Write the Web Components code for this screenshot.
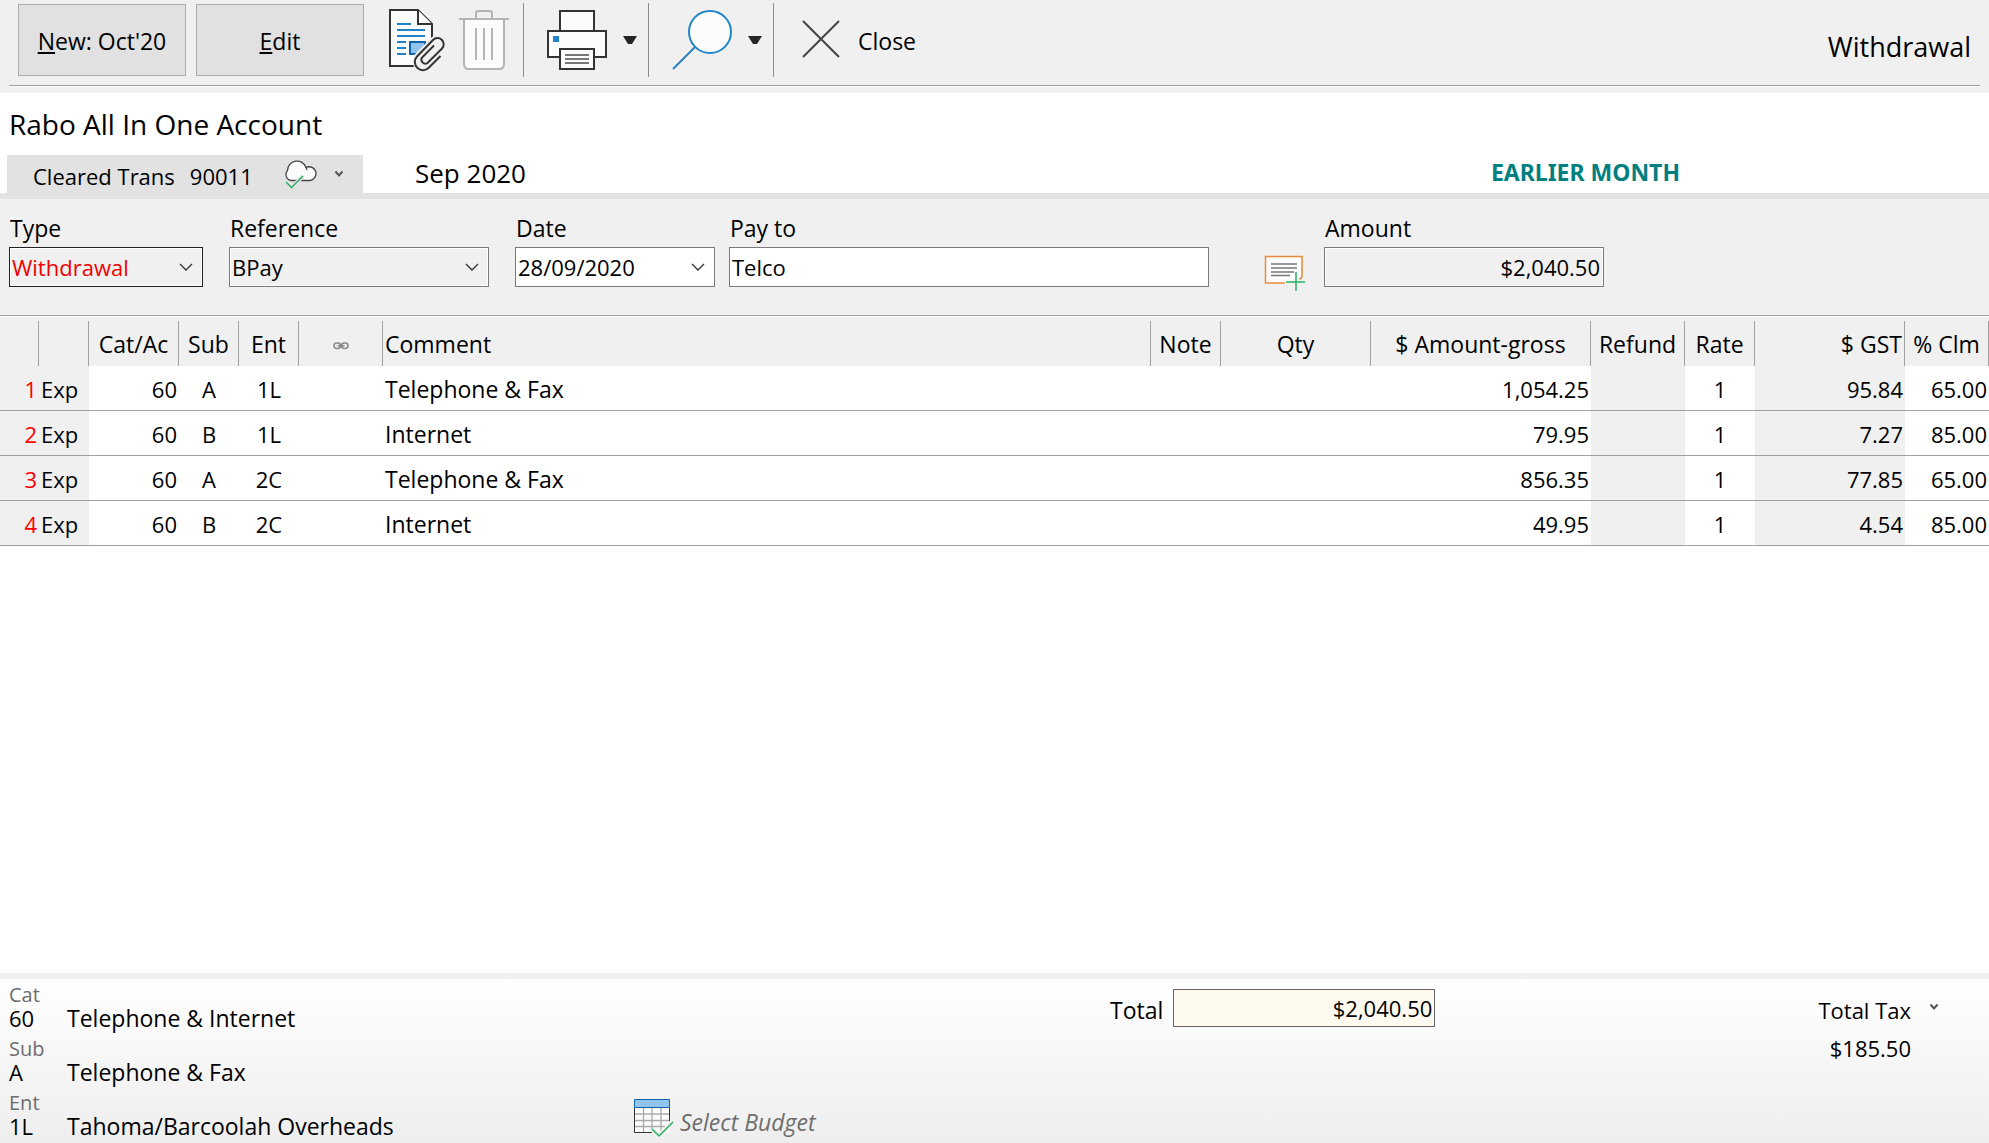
<!DOCTYPE html>
<html lang="en">
<head>
<meta charset="utf-8">
<title>Withdrawal - Rabo All In One Account</title>
<style>
  html, body { margin: 0; height: 100%; }
  body { font: 22px/30px "Open Sans", "Noto Sans", sans-serif; color: #000; background: #fff; }
</style>
</head>
<body>
<trans-window></trans-window>

<script>
const base = `
  *, *::before, *::after { box-sizing: border-box; }
  button, input, select { font: inherit; color: inherit; margin: 0; border-radius: 0; outline: none; }
  button { cursor: pointer; }
  svg { display: block; }
`;

class BaseElement extends HTMLElement {
  connectedCallback() {
    if (this.shadowRoot) return;
    this.attachShadow({ mode: 'open' }).innerHTML = `<style>${base}${this.styles()}</style>${this.markup()}`;
  }
  styles() { return ''; }
  markup() { return ''; }
}

const ICONS = {
  document: [56, 62, `
    <path d="M1 1H29L43 15V57H1Z" fill="#fcfcfc" stroke="#333" stroke-width="2"/>
    <path d="M29 1V15H43" fill="#fcfcfc" stroke="#333" stroke-width="2"/>
    <path d="M8 15H22M8 21H36M8 27H36M8 33H17M8 39H17M8 45H17" stroke="#1e86c8" stroke-width="2"/>
    <path d="M21 33H36V45H21Z" fill="#90c4ea" stroke="#0d63ae" stroke-width="2"/>
    <path d="M40 58A8 8 0 0 1 28 47.500L44 31A6 6 0 0 1 53 39.500Z" fill="#f0f0f0" stroke="#f0f0f0" stroke-width="6"/>
    <path d="M51.500 47L40 58.500A8 8 0 0 1 28 47.500L44 31A6 6 0 0 1 53 39.500L38.500 54A4 4 0 0 1 33 48.500L45 36.500" fill="none" stroke="#333" stroke-width="2"/>`],
  trash: [50, 60, `
    <path d="M5 9H45V54Q45 59 40 59H10Q5 59 5 54Z" fill="#fcfcfc" stroke="#b4b4b4" stroke-width="2"/>
    <path d="M0 9H50M17 9V3Q17 1 19 1H31Q33 1 33 3V9M17 18V50M25 18V50M33 18V50" fill="none" stroke="#b4b4b4" stroke-width="2"/>`],
  printer: [60, 60, `
    <g fill="#fcfcfc" stroke="#333" stroke-width="2"><path d="M13 1H47V21H13Z"/><path d="M1 21H59V47H1Z"/><path d="M13 39H47V59H13Z"/></g>
    <path d="M6 26H12V32H6Z" fill="#1e86c8"/><path d="M18 45H42M18 49H42M18 53H42" stroke="#777" stroke-width="2"/>`],
  search: [60, 60, `<circle cx="38" cy="22" r="21" fill="#fcfcfc" stroke="#1e86c8" stroke-width="2"/><path d="M23 37L1 59" stroke="#2a80c0" stroke-width="2"/>`],
  close: [38, 38, `<path d="M1 1L37 37M37 1L1 37" stroke="#444" stroke-width="2"/>`],
  triangle: [14, 8, `<path d="M0 0H14L9 8H5Z" fill="#262626"/>`],
  chevron: [14, 8, `<path d="M1 1L7 7L13 1" fill="none" stroke="#333" stroke-width="1.300"/>`],
  caret: [8, 6, `<path d="M0.500 0.500L4 4.500L7.500 0.500" fill="none" stroke="#555" stroke-width="2"/>`],
  cloud: [32, 28, `
    <path d="M7 19.500A6 6 0 0 1 2.500 9.500A9.500 9.500 0 0 1 21 6.500A7 7 0 0 1 31 12A7 7 0 0 1 25 19.500Z" fill="#fcfcfc" stroke="#444" stroke-width="1.300"/>
    <path d="M21 6.500A7 7 0 0 1 22 9" fill="none" stroke="#444" stroke-width="1.300"/>
    <path d="M1 21L6.500 26.500L18 15" fill="none" stroke="#e2e2e2" stroke-width="4"/>
    <path d="M1 21L6.500 26.500L18 15" fill="none" stroke="#27ae60" stroke-width="1.400"/>`],
  note: [40, 35, `
    <path d="M1 1H37V22L33 23.500L20 27H1Z" fill="#fcfcfc"/>
    <path d="M20 27H0.500V0.500H37V20Q37 23 34 23" fill="none" stroke="#ea8936" stroke-width="1.500"/>
    <path d="M6 8H32M6 12H32M6 16H29M6 19.500H25" stroke="#777" stroke-width="1.500"/>
    <path d="M21 26H40M31 16V35" stroke="#27ae60" stroke-width="1.500"/>`],
  budget: [40, 38, `
    <path d="M0.500 9H35.500V34H0.500Z" fill="#fcfcfc"/>
    <path d="M9.500 9V33M18 9V33M27 9V33M1 15H35M1 21.500H35M1 27.500H35" stroke="#aaa" stroke-width="1.300"/>
    <path d="M35.500 9V22M0.500 9V33.500H18" fill="none" stroke="#333"/>
    <path d="M0.500 0.500H35.500V8.500H0.500Z" fill="#90c4ea" stroke="#0d63ae"/>
    <path d="M18 30L25 37L39 23" fill="none" stroke="#f2f2f2" stroke-width="5"/>
    <path d="M18 30L25 37L39 23" fill="none" stroke="#27ae60" stroke-width="1.500"/>`],
  link: [16, 8, `<g fill="none" stroke="#888" stroke-width="1.500"><rect x="1" y="1" width="6.500" height="5.500" rx="2.700"/><rect x="8.500" y="1" width="6.500" height="5.500" rx="2.700"/><path d="M4.500 3.800H11.500"/></g>`]
};

customElements.define('app-icon', class extends BaseElement {
  styles() { return `:host { display: inline-block; flex: none; }`; }
  markup() {
    const [w, h, body] = ICONS[this.getAttribute('name')];
    return `<svg width="${w}" height="${h}" viewBox="0 0 ${w} ${h}" overflow="visible" aria-hidden="true">${body}</svg>`;
  }
});

customElements.define('push-button', class extends BaseElement {
  styles() { return `
    :host { display: block; }
    button { width: 168px; height: 72px; background: #e1e1e1; border: 1px solid #adadad; font-size: 23px; padding: 2px 0 0; white-space: nowrap; }
    button:hover { background: #e5f1fb; }
    ::slotted(u) { text-underline-offset: 2px; }`; }
  markup() { return `<button type="button"><slot></slot></button>`; }
});

/* Flat toolbar button: an icon, and optional text */
customElements.define('tool-button', class extends BaseElement {
  styles() { return `
    :host { display: block; }
    button { display: flex; align-items: center; gap: 18px; background: none; border: 0; padding: 0; font-size: 23px; }
    span { padding-top: 4px; }
    span:empty { display: none; }`; }
  markup() {
    const text = this.hasAttribute('text') ? this.getAttribute('label') : '';
    return `<button type="button" aria-label="${this.getAttribute('label')}"><app-icon name="${this.getAttribute('icon')}"></app-icon><span>${text}</span></button>`;
  }
});

customElements.define('app-toolbar', class extends BaseElement {
  styles() { return `
    :host { display: block; background: #f0f0f0; padding: 3px 9px 7px; }
    .bar { display: flex; align-items: center; height: 83px; padding: 0 9px 8px; border-bottom: 1px solid #a0a0a0; box-shadow: 0 1px #fff; }
    .group { display: flex; align-items: center; }
    .push { gap: 10px; padding-right: 25px; }
    .files { gap: 14px; padding-right: 14px; }
    .group.menu { height: 74px; gap: 16px; padding: 0 11px 0 23px; border-left: 1px solid #8c8c8c; }
    .group.last { height: 74px; padding: 0 0 2px 28px; border-left: 1px solid #8c8c8c; }
    h1 { margin: 0 0 0 auto; font-size: 27px; font-weight: 400; line-height: 38px; padding-top: 14px; }`; }
  markup() { return `
    <div class="bar">
      <div class="group push"><push-button><u>N</u>ew: Oct'20</push-button><push-button><u>E</u>dit</push-button></div>
      <div class="group files"><tool-button icon="document" label="Attachments"></tool-button><tool-button icon="trash" label="Delete"></tool-button></div>
      <div class="group menu"><tool-button icon="printer" label="Print"></tool-button><tool-button icon="triangle" label="Print options"></tool-button></div>
      <div class="group menu"><tool-button icon="search" label="Find"></tool-button><tool-button icon="triangle" label="Find options"></tool-button></div>
      <div class="group last"><tool-button icon="close" label="Close" text></tool-button></div>
      <h1>Withdrawal</h1>
    </div>`; }
});

customElements.define('account-bar', class extends BaseElement {
  styles() { return `
    :host { display: block; background: #fff; padding-top: 12px; border-bottom: 6px solid #e2e2e2; }
    h2 { margin: 0; padding-left: 9px; font-size: 28px; font-weight: 400; line-height: 38px; }
    .row { display: flex; align-items: center; height: 38px; margin-top: 12px; padding-left: 7px; }
    button { display: flex; align-items: center; gap: 15px; width: 356px; height: 38px; padding: 4px 20px 0 26px; background: #e2e2e2; border: 0; }
    app-icon { margin-bottom: 4px; }
    .cloud { margin: 0 3px 2px auto; }
    .month { margin-left: 52px; font-size: 26px; flex: 1; padding-bottom: 2px; }
    strong { font-family: "Noto Sans", sans-serif; font-size: 23px; color: #008080; margin-right: 309px; padding-bottom: 4px; }`; }
  markup() { return `
    <h2>Rabo All In One Account</h2>
    <div class="row">
      <button type="button"><span>Cleared Trans</span><span>90011</span><app-icon class="cloud" name="cloud"></app-icon><app-icon name="caret"></app-icon></button>
      <span class="month">Sep 2020</span>
      <strong>EARLIER MONTH</strong>
    </div>`; }
});

/* Labelled field. kind: select, date, text or readonly */
customElements.define('form-field', class extends BaseElement {
  styles() { return `
    :host { display: flex; flex-direction: column; gap: 4px; }
    label { padding-left: 1px; font-size: 23px; line-height: 30px; }
    .box { display: flex; align-items: center; height: 40px; border: 1px solid #7a7a7a; background: #fff; padding-right: 9px; }
    .box.plain { padding-right: 0; }
    .box.grey { background: #f0f0f0; box-shadow: inset 0 0 0 1px #fff; }
    .box.red { color: #f00000; border-color: #222; }
    input, select { flex: 1; min-width: 0; height: 38px; border: 0; padding: 0 2px; background: none; appearance: none; }
    select { margin-right: -14px; }
    input[readonly] { text-align: right; padding-right: 3px; }
    .box > app-icon { pointer-events: none; }
    button { display: flex; background: none; border: 0; padding: 0; }`; }
  markup() {
    const kind = this.getAttribute('kind'), value = this.getAttribute('value');
    const cls = { select: 'grey', readonly: 'grey plain', text: 'plain', date: '' }[kind] + (this.hasAttribute('red') ? ' red' : '');
    const control = kind === 'select'
      ? `<select id="c"><option>${value}</option></select><app-icon name="chevron"></app-icon>`
      : `<input id="c" type="text" value="${value}" ${kind === 'readonly' ? 'readonly' : ''}>` +
        (kind === 'date' ? `<button type="button" aria-label="Open calendar"><app-icon name="chevron"></app-icon></button>` : '');
    return `<label for="c">${this.getAttribute('label')}</label><div class="box ${cls}">${control}</div>`;
  }
});

customElements.define('trans-form', class extends BaseElement {
  styles() { return `
    :host { display: flex; align-items: flex-end; background: #f0f0f0; padding: 14px 9px 28px; border-bottom: 1px solid #a0a0a0; }
    .type { width: 194px; margin-right: 26px; }
    .ref { width: 260px; margin-right: 26px; }
    .date { width: 200px; margin-right: 14px; }
    .payee { width: 480px; margin-right: 56px; }
    .amount { width: 280px; margin-left: 19px; }
    tool-button { margin-bottom: -4px; }`; }
  markup() { return `
    <form-field class="type" label="Type" kind="select" value="Withdrawal" red></form-field>
    <form-field class="ref" label="Reference" kind="select" value="BPay"></form-field>
    <form-field class="date" label="Date" kind="date" value="28/09/2020"></form-field>
    <form-field class="payee" label="Pay to" kind="text" value="Telco"></form-field>
    <tool-button icon="note" label="Add note"></tool-button>
    <form-field class="amount" label="Amount" kind="readonly" value="$2,040.50"></form-field>`; }
});

const COLUMNS = [
  ['', 39, 'r red grey'], ['', 50, 'l grey'], ['Cat/Ac', 90, 'r'], ['Sub', 60, 'c'], ['Ent', 60, 'c'],
  ['<app-icon name="link"></app-icon>', 84, 'c'], ['Comment', 0, 'l wide'], ['Note', 70, 'c'], ['Qty', 150, 'c'],
  ['$ Amount-gross', 220, 'r'], ['Refund', 94, 'c grey'], ['Rate', 70, 'c'], ['$ GST', 150, 'r grey hr'], ['% Clm', 84, 'r']
];
const ROWS = [
  [1, 'Exp', 60, 'A', '1L', '', 'Telephone &amp; Fax', '', '', '1,054.25', '', 1, '95.84', '65.00'],
  [2, 'Exp', 60, 'B', '1L', '', 'Internet', '', '', '79.95', '', 1, '7.27', '85.00'],
  [3, 'Exp', 60, 'A', '2C', '', 'Telephone &amp; Fax', '', '', '856.35', '', 1, '77.85', '65.00'],
  [4, 'Exp', 60, 'B', '2C', '', 'Internet', '', '', '49.95', '', 1, '4.54', '85.00']
];

customElements.define('trans-grid', class extends BaseElement {
  styles() { return `
    :host { display: block; flex: 1; background: #fff; }
    .frame { border-top: 1px solid #fff; }
    .frame::before { content: ""; display: block; height: 4px; background: #f0f0f0; }
    table { width: 100%; table-layout: fixed; border-collapse: separate; border-spacing: 0; }
    th, td { height: 45px; padding: 0 2px; white-space: nowrap; }
    th { background: #f0f0f0; border-right: 1px solid #a0a0a0; font-size: 23px; font-weight: 400; text-align: center; }
    th.wide { text-align: left; }
    th.hr { text-align: right; }
    th app-icon { vertical-align: middle; }
    td { border-bottom: 1px solid #a0a0a0; padding-top: 2px; }
    td.r { text-align: right; }
    td.c { text-align: center; }
    td.red { color: #f00; }
    td.grey { background: #f0f0f0; }
    td.wide { font-size: 23px; }`; }
  markup() {
    return `<div class="frame"><table>
      <colgroup>${COLUMNS.map(c => `<col${c[1] ? ` style="width:${c[1]}px"` : ''}>`).join('')}</colgroup>
      <thead><tr>${COLUMNS.map(c => `<th class="${c[2]}" scope="col">${c[0]}</th>`).join('')}</tr></thead>
      <tbody>${ROWS.map(r => `<tr>${r.map((v, i) => `<td class="${COLUMNS[i][2]}">${v}</td>`).join('')}</tr>`).join('')}</tbody>
    </table></div>`;
  }
});

customElements.define('code-detail', class extends BaseElement {
  styles() { return `
    :host { display: grid; grid-template-columns: 58px auto; font-size: 23px; line-height: 22px; white-space: nowrap; }
    .kind { grid-column: 1 / -1; font-size: 20px; line-height: 24px; color: #6d6d6d; }
    .code { font-size: 22px; }`; }
  markup() { return `<span class="kind">${this.getAttribute('kind')}</span><span class="code">${this.getAttribute('code')}</span><slot></slot>`; }
});

customElements.define('trans-footer', class extends BaseElement {
  styles() { return `
    :host { display: flex; align-items: flex-start; border-top: 6px solid #f0f0f0; background: linear-gradient(#fff, #eee) padding-box; padding: 4px 51px 6px 9px; }
    .codes { display: flex; flex-direction: column; gap: 8px; width: 625px; }
    .budget { align-self: flex-end; display: flex; align-items: center; gap: 6px; width: 476px; padding: 0; border: 0; background: none; color: #6d6d6d; font-size: 23px; font-style: italic; text-align: left; }
    .budget span { padding-top: 8px; }
    .total { display: flex; align-items: center; gap: 10px; padding-top: 6px; }
    .total label { font-size: 23px; padding-top: 4px; }
    .total input { width: 262px; height: 38px; border: 1px solid #646464; background: #fffaf0; text-align: right; padding: 0 2px; }
    .tax { display: grid; grid-template-columns: auto 8px; column-gap: 19px; row-gap: 8px; margin-left: auto; padding-top: 12px; text-align: right; }
    .tax button { display: flex; align-items: flex-start; border: 0; background: none; padding: 9px 0 0; height: 16px; }`; }
  markup() { return `
    <div class="codes">
      <code-detail kind="Cat" code="60">Telephone &amp; Internet</code-detail>
      <code-detail kind="Sub" code="A">Telephone &amp; Fax</code-detail>
      <code-detail kind="Ent" code="1L">Tahoma/Barcoolah Overheads</code-detail>
    </div>
    <button class="budget" type="button"><app-icon name="budget"></app-icon><span>Select Budget</span></button>
    <div class="total"><label for="total">Total</label><input id="total" type="text" readonly value="$2,040.50"></div>
    <div class="tax"><span>Total Tax</span><button type="button" aria-label="Tax details"><app-icon name="caret"></app-icon></button><output>$185.50</output></div>`; }
});

customElements.define('trans-window', class extends BaseElement {
  styles() { return `:host { display: flex; flex-direction: column; min-height: 100vh; }`; }
  markup() { return `<app-toolbar></app-toolbar><account-bar></account-bar><trans-form></trans-form><trans-grid></trans-grid><trans-footer></trans-footer>`; }
});
</script>
</body>
</html>
